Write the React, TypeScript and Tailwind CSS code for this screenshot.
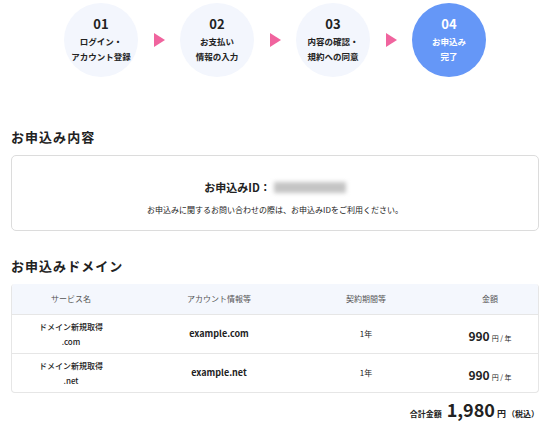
import React from "react";

const font = { fontFamily: '"Noto Sans CJK JP", "Noto Sans", sans-serif' };

function Step({ num, l1, l2, active }: { num: string; l1: string; l2: string; active?: boolean }) {
  return (
    <div
      className={`w-[74px] h-[74px] rounded-full flex flex-col items-center justify-center font-bold ${
        active ? "bg-[#6597f7] text-white" : "bg-[#f3f6fd] text-[#222]"
      }`}
    >
      <div className="text-[13px] leading-[16px] mb-[2px]">{num}</div>
      <div className="text-[8.5px] leading-[15px] whitespace-nowrap">{l1}</div>
      <div className="text-[8.5px] leading-[15px] whitespace-nowrap">{l2}</div>
    </div>
  );
}

function Arrow() {
  return (
    <div className="w-[42px] flex justify-center">
      <svg width="11" height="14" viewBox="0 0 11 14">
        <polygon points="0,0 11,7 0,14" fill="#f0649e" />
      </svg>
    </div>
  );
}

function Row({ ext, acct }: { ext: string; acct: string }) {
  return (
    <div className="grid grid-cols-[118px_178px_116px_114px] h-[39px] items-center border-t border-[#e6e6e6] text-[#222]">
      <div className="flex flex-col items-center text-[8px] leading-[15px] font-medium">
        <span>ドメイン新規取得</span>
        <span>{ext}</span>
      </div>
      <div className="text-center text-[9px] font-semibold">{acct}</div>
      <div className="text-center text-[8px]">1年</div>
      <div className="text-center pl-[18px] whitespace-nowrap">
        <span className="text-[12px] font-bold">990</span>
        <span className="text-[7px] ml-[2px]">円 / 年</span>
      </div>
    </div>
  );
}

export default function App() {
  return (
    <div className="w-[550px] h-[423px] overflow-hidden bg-white text-[#222]" style={font}>
      <div className="px-[11px] pt-[3px]">
        <div className="flex items-center justify-center">
          <Step num="01" l1="ログイン・" l2="アカウント登録" />
          <Arrow />
          <Step num="02" l1="お支払い" l2="情報の入力" />
          <Arrow />
          <Step num="03" l1="内容の確認・" l2="規約への同意" />
          <Arrow />
          <Step num="04" l1="お申込み" l2="完了" active />
        </div>

        <h2 className="mt-[50px] text-[13px] leading-[20px] font-bold tracking-[0.08em]">お申込み内容</h2>
        <div className="mt-[8px] h-[76px] border border-[#dcdcdc] rounded-[5px] flex flex-col items-center pt-[24px]">
          <div className="flex items-center text-[11px] leading-[15px] font-bold">
            <span>お申込みID：</span>
            <span className="inline-block w-[72px] h-[11px] bg-[#c4c4c4] blur-[2px] ml-[3px]" />
          </div>
          <div className="mt-[9px] text-[8px] leading-[12px]">
            お申込みに関するお問い合わせの際は、お申込みIDをご利用ください。
          </div>
        </div>

        <h2 className="mt-[25px] text-[13px] leading-[20px] font-bold tracking-[0.08em]">お申込みドメイン</h2>
        <div className="mt-[8px] border border-[#e6e6e6] border-t-0 rounded-[4px] overflow-hidden">
          <div className="grid grid-cols-[118px_178px_116px_114px] h-[30px] items-center bg-[#f4f7fd] text-[8px] text-[#555]">
            <div className="text-center">サービス名</div>
            <div className="text-center">アカウント情報等</div>
            <div className="text-center">契約期間等</div>
            <div className="text-center pl-[18px]">金額</div>
          </div>
          <Row ext=".com" acct="example.com" />
          <Row ext=".net" acct="example.net" />
        </div>

        <div className="mt-[6px] flex items-baseline justify-end font-bold whitespace-nowrap">
          <span className="text-[8px]">合計金額</span>
          <span className="text-[18px] leading-[20px] ml-[5px]">1,980</span>
          <span className="text-[9px] ml-[2px]">円</span>
          <span className="text-[8px] ml-[1px]">（税込）</span>
        </div>
      </div>
    </div>
  );
}
